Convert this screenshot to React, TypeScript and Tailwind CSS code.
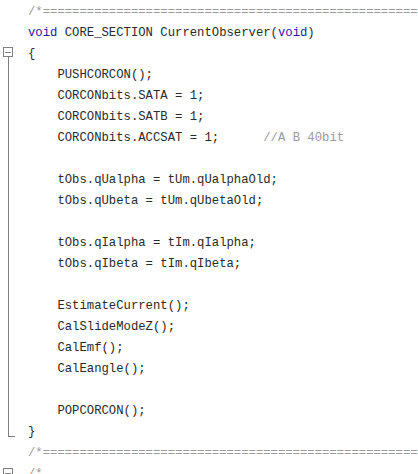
import React from "react";

type Tok = { t: string; c?: "kw" | "cm" };
type Line = Tok[];

const EQ = "=".repeat(80);

const kw = (t: string): Tok => ({ t, c: "kw" });
const cm = (t: string): Tok => ({ t, c: "cm" });
const tx = (t: string): Tok => ({ t });

// lines 3..19 sit inside the folded block (with the dotted guide)
const body: Line[] = [
  [tx("    PUSHCORCON();")],
  [tx("    CORCONbits.SATA = 1;")],
  [tx("    CORCONbits.SATB = 1;")],
  [tx("    CORCONbits.ACCSAT = 1;      "), cm("//A B 40bit")],
  [],
  [tx("    tObs.qUalpha = tUm.qUalphaOld;")],
  [tx("    tObs.qUbeta = tUm.qUbetaOld;")],
  [],
  [tx("    tObs.qIalpha = tIm.qIalpha;")],
  [tx("    tObs.qIbeta = tIm.qIbeta;")],
  [],
  [tx("    EstimateCurrent();")],
  [tx("    CalSlideModeZ();")],
  [tx("    CalEmf();")],
  [tx("    CalEangle();")],
  [],
  [tx("    POPCORCON();")],
];

const Code = ({ line }: { line: Line }) => (
  <div className="h-[21px] leading-[21px] whitespace-pre">
    {line.length === 0 ? " " : null}
    {line.map((tok, i) => (
      <span
        key={i}
        className={
          tok.c === "kw"
            ? "text-[#1a1aa6]"
            : tok.c === "cm"
            ? "text-[#9a9a9a]"
            : "text-[#2a2a2a]"
        }
      >
        {tok.t}
      </span>
    ))}
  </div>
);

const Gutter = () => (
  <svg width="28" height="474" className="shrink-0" shapeRendering="crispEdges">
    {/* fold box for the function body */}
    <rect x="3.5" y="47.5" width="9" height="9" fill="#fff" stroke="#808080" />
    <line x1="5" y1="52" x2="11" y2="52" stroke="#808080" />
    <line x1="8" y1="57" x2="8" y2="437" stroke="#808080" />
    <line x1="8" y1="436.5" x2="15" y2="436.5" stroke="#808080" />
    {/* next fold box, cut off by the bottom edge */}
    <rect x="3.5" y="468.5" width="9" height="9" fill="#fff" stroke="#808080" />
    <line x1="5" y1="473" x2="11" y2="473" stroke="#808080" />
  </svg>
);

export default function App() {
  return (
    <div className="w-[418px] h-[474px] overflow-hidden bg-white flex">
      <Gutter />
      <div className="flex-1 overflow-hidden pt-[2px] font-[family-name:'Liberation_Mono',monospace] text-[12.25px]">
        <Code line={[cm("/*" + EQ)]} />
        <Code line={[kw("void"), tx(" CORE_SECTION CurrentObserver("), kw("void"), tx(")")]} />
        <Code line={[tx("{")]} />
        <div className="border-l border-dotted border-[#c8c8c8] -ml-px">
          {body.map((l, i) => (
            <Code key={i} line={l} />
          ))}
        </div>
        <Code line={[tx("}")]} />
        <Code line={[cm("/*" + EQ)]} />
        <Code line={[cm("/*")]} />
      </div>
    </div>
  );
}
